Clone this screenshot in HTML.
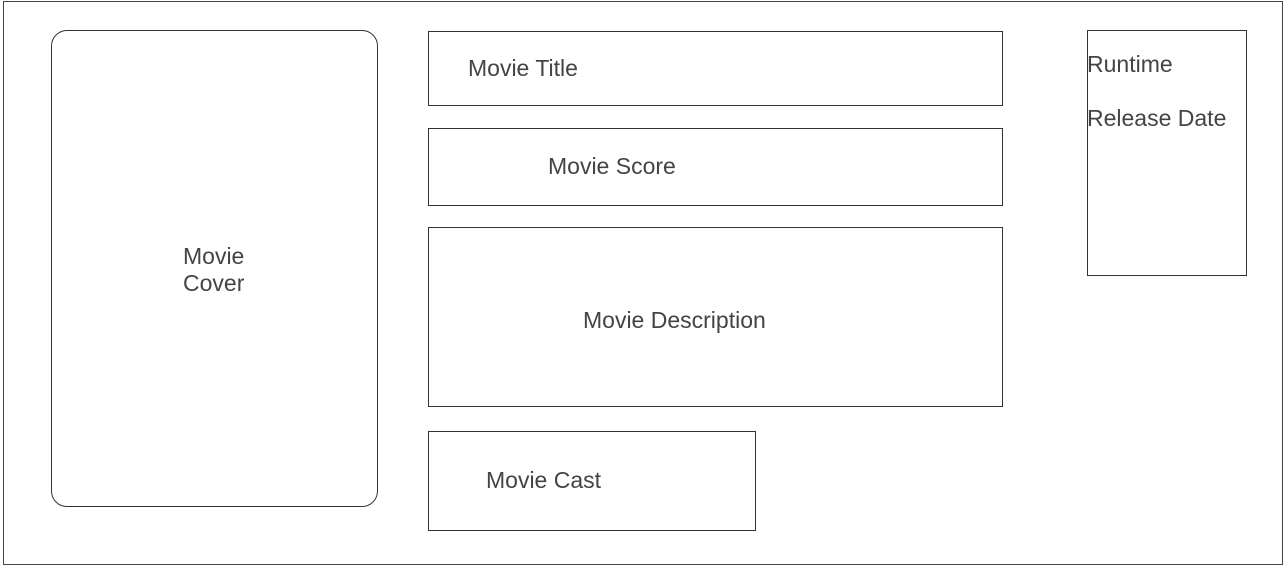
<!DOCTYPE html>
<html><head><style>
html,body{margin:0;padding:0;background:#fff;width:1287px;height:568px;overflow:hidden}
div{position:absolute;box-sizing:border-box;border:1px solid #333}
span{position:absolute;white-space:nowrap;font-family:"Liberation Sans",sans-serif;color:#444;font-size:23px;line-height:27px}
</style></head><body>
<div style="left:3px;top:1px;width:1280px;height:564px;border-color:#444"></div>
<div style="left:51px;top:30px;width:327px;height:477px;border-radius:16px"></div>
<span style="left:183px;top:243px">Movie<br>Cover</span>
<div style="left:428px;top:31px;width:575px;height:75px"></div>
<span style="left:468px;top:55px">Movie Title</span>
<div style="left:428px;top:128px;width:575px;height:78px"></div>
<span style="left:548px;top:153px">Movie Score</span>
<div style="left:428px;top:227px;width:575px;height:180px"></div>
<span style="left:583px;top:307px">Movie Description</span>
<div style="left:428px;top:431px;width:328px;height:100px"></div>
<span style="left:486px;top:467px">Movie Cast</span>
<div style="left:1087px;top:30px;width:160px;height:246px"></div>
<span style="left:1087px;top:51px">Runtime</span>
<span style="left:1087px;top:105px">Release Date</span>
</body></html>
